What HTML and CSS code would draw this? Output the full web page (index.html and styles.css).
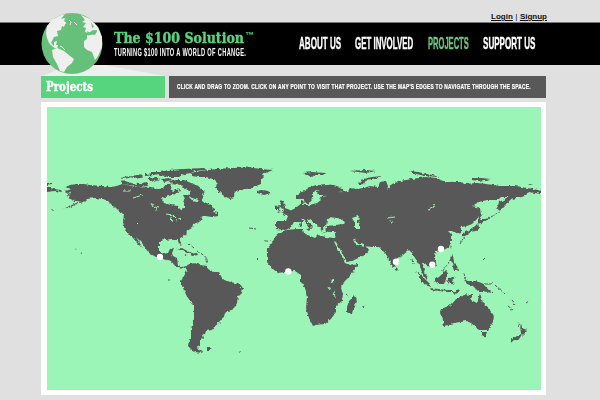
FILE: index.html
```html
<!DOCTYPE html>
<html lang="en">
<head>
<meta charset="utf-8">
<title>The $100 Solution</title>
<link rel="stylesheet" href="styles.css">
</head>
<body>
<div class="account"><a href="#">Login</a><span class="bar">|</span><a href="#">Signup</a></div>
<header class="header">
  <div class="brand">
    <svg class="globe" viewBox="30 5 150 75" width="150" height="75" aria-hidden="true">
      <path fill="#efefef" d="M42 76L59 69L92 65L104 65L165 76Z"/>
      <circle cx="72" cy="43.5" r="30.5" fill="#67c07a"/>
      <path fill="#efefef" d="M60 15.500L65 14L61 19L65 18L64 22L66 22L64 27L62 26L61 30L57 31L58 36L54 37L51 43L54 46L54 42L57 41L56 45L58 45L57 49L53 47L49 43L47 38L46 33L47 26L52 20Z"/>
      <path fill="#efefef" d="M52 50L57 48L64 51L70 56L74 59L72 63L67 67L64 72L60 71L57 64L53 57Z"/>
      <path fill="#efefef" d="M81 15L90 19L98 27L102 37L102 47L98 56L95 60L92 52L87 50L84 47L84 41L87 39L87 35L91 35L96 33L97 30L92 31L88 33L85 32L86 28L83 27L86 23L82 22L85 20Z"/>
      <path fill="#67c07a" d="M87 31L90 33L93 30L97 31L95 35L90 34L88 36ZM91 22L94 27L92 28Z"/>
      <path fill="none" stroke="#efefef" d="M69 20L71 22L70 25M74 22L77 25M63 20L66 24M60 46L62 47L65 50"/>
    </svg>
    <div class="titles">
      <h1 class="name"><span class="fit">The $100 Solution</span><span class="tm">™</span></h1>
      <p class="tagline"><span class="fit">TURNING $100 INTO A WORLD OF CHANGE.</span></p>
    </div>
  </div>
  <nav class="nav">
    <a class="about" href="#"><span>ABOUT US</span></a>
    <a class="involved" href="#"><span>GET INVOLVED</span></a>
    <a class="projects" href="#"><span>PROJECTS</span></a>
    <a class="support" href="#"><span>SUPPORT US</span></a>
  </nav>
</header>
<main class="content">
  <div class="heading-row">
    <h2 class="heading"><span>Projects</span></h2>
    <p class="hint"><span>CLICK AND DRAG TO ZOOM. CLICK ON ANY POINT TO VISIT THAT PROJECT. USE THE MAP'S EDGES TO NAVIGATE THROUGH THE SPACE.</span></p>
  </div>
  <section class="map-card">
    <svg class="map" viewBox="47 107 494 283" role="img" aria-label="World map of projects">
      <defs>
        <filter id="coast" filterUnits="userSpaceOnUse" x="47" y="107" width="494" height="283">
          <feTurbulence type="fractalNoise" baseFrequency="0.3" numOctaves="2" seed="4" result="n"/>
          <feDisplacementMap in="SourceGraphic" in2="n" scale="3.500" xChannelSelector="R" yChannelSelector="G"/>
        </filter>
      </defs>
      <g filter="url(#coast)">
      <g class="land">
        <!-- North America -->
        <path d="M66 187L70 185L77 184L84 184L90 185L103 186L110 187L117 186L122 184L128 185L135 187L142 187L150 188L158 189L163 188L166 184L171 183L170 189L174 191L178 187L181 191L175 194L172 196L164 197L162 200L164 203L171 205L178 206L180 209L184 208L184 203L185 199L183 195L187 195L192 200L197 201L200 198L203 202L209 204L212 207L215 209L213 212L218 213L218 216L211 216L203 216L200 218L203 219L199 222L193 224L192 228L187 231L186 235L180 238L180 241L182 244L181 246L179 244L178 240L173 240L170 239L167 240L163 239L159 242L159 250L163 254L168 253L170 249L174 248L172 253L173 256L177 258L178 265L183 267L186 266L185 268L182 269L176 267L171 261L163 259L156 257L149 253L146 249L142 243L138 239L136 237L141 245L142 248L137 243L133 238L128 233L124 227L123 220L124 215L122 213L119 211L115 207L112 205L108 201L103 199L95 198L87 199L84 202L78 203L71 207L63 209L74 204L80 201L75 201L68 198L70 196L66 195L72 192L67 191L71 189Z"/>
        <!-- Arctic islands -->
        <path d="M121 181L126 180L130 183L139 184L147 182L148 186L138 187L129 185L122 184ZM123 177L132 176L129 178L122 179ZM130 177L140 174L143 177L137 179ZM145 174L156 173L154 175L145 176ZM149 178L156 177L160 180L155 182L149 180ZM157 173L168 170L183 169L203 168L207 170L195 171L191 173L185 174L179 177L169 177L160 175ZM151 172L160 172L161 174L151 175ZM161 179L170 178L172 180L164 182ZM169 181L177 180L184 180L191 183L196 185L202 190L205 192L202 194L204 198L199 200L192 198L187 195L191 192L184 188L181 185L171 184Z"/>
        <!-- Greenland and Iceland -->
        <path d="M191 173L201 171L216 169L232 168L250 167.500L261 169L273 170L268 172L262 174L264 177L261 180L261 184L256 186L250 188L242 190L236 192L233 198L230 199L224 196L219 192L216 187L217 183L213 179L205 177L198 177L192 176ZM257 191L261 190L269 191L271 193L264 195L257 193Z"/>
        <!-- Caribbean, Hawaii and Aleutians -->
        <path d="M176 249L182 248L191 253L187 253L181 250ZM190 254L197 253L198 255L192 256ZM184 254L187 255L184 256ZM202 215L207 211L211 210L213 215L218 216L212 217L205 216ZM80 252L82 253L81 254ZM75 249L77 250L76 250ZM47 187L54 189L61 190L62 192L55 191L47 192ZM47 183L51 183L51 184L47 185ZM64 191L68 190L71 192L66 193Z"/>
        <!-- South America -->
        <path d="M185 267L190 264L195 263L199 265L207 266L208 269L214 272L219 272L221 276L223 280L231 282L238 284L243 288L242 293L238 297L237 303L234 309L226 312L223 317L220 322L214 327L212 330L206 331L205 334L202 335L203 338L200 341L200 345L198 348L200 351L203 353L194 352L188 346L189 340L191 337L191 329L194 319L194 305L188 299L184 290L181 284L181 281L184 276L187 270ZM207 348L212 348L211 350L207 350ZM238 351L241 352L240 353Z"/>
        <!-- Africa -->
        <path d="M281 232L286 230L297 229L303 229L304 233L310 236L315 238L318 235L326 237L334 238L336 243L340 251L346 261L349 265L357 263L357 266L351 275L344 282L341 287L343 294L342 301L336 306L336 312L331 319L325 324L316 325L313 326L309 318L306 308L307 297L305 288L301 281L301 275L298 273L295 271L285 272L278 273L273 269L267 262L267 249L272 243L275 237ZM355 295L357 301L353 312L350 314L347 312L347 307L349 301Z"/>
        <!-- Europe and Asia -->
        <path d="M276 221L286 221L288 216L284 214L282 212L287 212L294 209L298 206L301 204L301 200L304 201L303 205L309 205L317 203L321 200L320 197L327 196L321 195L318 195L317 191L320 190L316 190L313 193L313 198L308 204L304 202L303 199L296 199L296 195L304 191L310 187L316 185L326 184L334 185L342 188L344 191L339 193L347 191L350 188L356 189L363 188L370 186L378 187L380 182L386 181L388 186L387 190L392 184L400 181L412 179L426 177L437 178L443 181L454 182L462 182L464 184L477 183L487 184L500 186L516 186L527 188L534 189L541 191L541 194L535 193L529 192L525 196L516 198L510 200L507 204L500 211L498 208L502 201L508 197L501 197L498 200L487 200L479 202L472 206L477 207L480 213L477 219L472 224L467 226L461 227L459 230L461 233L458 234L453 231L448 231L451 234L451 242L449 247L442 251L436 252L434 256L435 260L437 266L429 268L425 263L422 263L425 269L424 272L429 279L427 280L422 273L420 266L417 261L415 258L412 253L409 250L403 255L397 259L396 265L393 268L390 262L386 254L384 252L379 247L373 247L362 246L358 243L361 246L364 245L369 250L365 255L352 261L347 262L341 254L334 242L334 238L336 232L330 232L325 231L327 226L334 225L344 224L337 218L334 220L331 218L327 221L326 226L322 231L317 225L313 222L307 218L308 222L313 226L310 229L304 222L298 222L294 222L291 227L286 230L276 229Z"/>
        <path d="M281 200L284 203L285 208L290 210L291 212L281 213L284 209L280 207ZM275 206L280 205L279 210L275 210ZM281 212L277 213L279 211ZM300 222L302 223L301 227L299 226ZM306 229L311 228L309 231ZM321 232L327 233L322 234Z"/>
        <!-- Arctic coast islands -->
        <path d="M303 173L312 172L326 173L324 175L315 175L312 177L306 175ZM350 171L365 170L376 171L366 173ZM358 184L363 179L372 177L382 176L378 178L366 180L364 184L359 185ZM409 171L418 172L427 174L440 177L425 176L412 173ZM470 178L481 178L491 179L479 181L472 180ZM528 184L533 184L530 185Z"/>
        <!-- Japan, Kamchatka, Sakhalin and Taiwan -->
        <path d="M507 198L505 203L501 211L497 209L499 202ZM478 207L480 208L481 214L482 216L479 220L478 215ZM478 219L485 219L491 217L484 222L478 224ZM478 223L479 227L478 230L471 232L465 236L463 237L463 233L472 229L476 225ZM458 227L461 229L461 233L458 233ZM450 245L452 246L451 249Z"/>
        <!-- Southeast Asia and New Guinea -->
        <path d="M395 266L398 269L397 271L395 270ZM416 271L422 276L430 284L431 287L425 285L420 278ZM430 288L438 289L447 290L454 291L457 292L447 292L431 290ZM435 279L439 277L445 271L448 273L446 279L444 284L438 284L435 281ZM448 279L452 278L456 277L452 280L454 285L449 282L448 286L447 282ZM451 254L453 256L454 262L457 265L458 271L454 270L452 266L455 265L450 260ZM463 279L468 281L475 281L482 283L487 288L491 293L484 291L478 291L473 286L467 284ZM453 292L460 290L456 294Z"/>
        <!-- Australia and New Zealand -->
        <path d="M441 309L451 305L457 298L463 296L464 294L472 295L471 300L477 303L480 293L483 303L489 308L494 316L493 322L488 330L479 330L471 323L466 321L454 323L444 326L443 320L440 313ZM482 332L487 332L485 337L482 335ZM520 326L524 329L528 330L523 335L521 333ZM520 334L523 336L517 340L512 342L511 340Z"/>
      </g>
      <g class="islets">
        <path d="M485 284L491 284L493 282M488 291L494 293M495 285L505 294M511 300L515 305M508 306L513 310M526 303L529 301M520 326L518 322M449 262L442 272M412 259L413 264M464 273L465 279M491 217L501 211M460 244L464 237M189 244L194 248M197 251L205 256L207 263M250 228L256 229M265 241L270 241M256 257L258 259M168 280L170 280M362 307L366 306M346 294L349 296M483 260L485 258M500 206L497 211M114 206L114 209M51 210L54 210"/>
      </g>
      <g class="water">
        <path d="M163 198L172 195L182 195L184 199L184 207L180 209L178 205L168 204L163 201ZM327 220L331 217L342 219L344 223L334 224L327 224ZM352 218L358 216L360 219L357 221L360 224L360 229L355 229L355 223ZM330 280L334 279L334 282L331 283Z"/>
      </g>
      <g class="lakes">
        <path d="M122 191L131 191M133 198L143 195M154 180L158 182M151 203L153 207L158 211M155 207L159 208M166 214L173 215L176 218M171 217L172 222M176 220L181 218M172 190L178 189L180 193M163 184L173 183M128 181L140 182M387 218L395 217M389 221L393 222M428 210L433 208L435 204M328 286L330 290M334 292L335 298M138 224L139 225"/>
        <path class="seas" d="M335 242L340 251L347 264L356 262M354 239L357 244L364 246M302 219L307 225M314 193L314 199L310 202"/>
      </g>
      </g>
      <g class="pins">
        <circle cx="160" cy="257" r="3.200"/><circle cx="288.300" cy="271.500" r="3.200"/><circle cx="396" cy="261.700" r="3.200"/><circle cx="432.300" cy="264.700" r="3.200"/><circle cx="441" cy="249" r="3.200"/>
      </g>
    </svg>
  </section>
</main>
</body>
</html>
```
FILE: styles.css
```css
* { box-sizing: border-box; }
body {
  margin: 0;
  height: 400px;
  overflow: hidden;
  background: #e0e0e0;
  font-family: "Liberation Sans", Arial, sans-serif;
}
h1, h2, p { margin: 0; }
a { color: inherit; }
.account {
  height: 22px;
  padding: 12px 53px 0 0;
  display: flex;
  justify-content: flex-end;
  font-size: 8px;
  line-height: 10px;
  font-weight: bold;
  color: #111;
}
.bar { margin: 0 2.5px; font-weight: normal; }
.header {
  height: 43px;
  background: #000;
  border-top: 1px solid #777;
  display: flex;
  color: #fff;
}
.brand { display: flex; width: 299px; padding-left: 30px; }
.globe { flex: none; margin: -18px -66px 0 0; position: relative; }
.titles { position: relative; white-space: nowrap; padding-top: 6px; }
.name {
  display: flex;
  height: 18px;
  color: #57d47e;
  font: bold 15px/18px "DejaVu Serif", serif;
  -webkit-text-stroke: .4px #57d47e;
}
.fit { display: inline-block; transform-origin: left center; }
.name .fit { width: 131px; transform: scaleX(.84); }
.tm { font: bold 9px/13px "Liberation Sans", sans-serif; -webkit-text-stroke: 0; }
.tagline { height: 12px; font: bold 10px/12px "Liberation Sans", sans-serif; letter-spacing: .6px; }
.tagline .fit { transform: scaleX(.565); }
.nav { display: flex; gap: 14px; padding-top: 11px; white-space: nowrap; }
.nav a { display: block; height: 20px; text-decoration: none; font: bold 17px/20px "Liberation Sans", sans-serif; }
.nav span { display: inline-block; transform-origin: left center; -webkit-text-stroke: .4px currentColor; }
.about { width: 42px; }
.about span { transform: scaleX(.475); }
.involved { width: 59px; }
.involved span { transform: scaleX(.465); }
.projects { width: 41px; color: #67c77b; }
.projects span { transform: scaleX(.445); }
.support { width: 53px; }
.support span { transform: scaleX(.475); }
.content { width: 505px; margin: 11px 0 0 41px; }
.heading-row { display: flex; gap: 4px; height: 22px; }
.heading {
  width: 124px;
  padding-left: 5px;
  background: #57d47e;
  color: #fff;
  font: bold 12.5px/22px "DejaVu Serif", serif;
  -webkit-text-stroke: .4px #fff;
}
.heading span { display: inline-block; transform: scaleX(.82); transform-origin: left center; }
.hint {
  width: 377px;
  padding-left: 8px;
  background: #585858;
  color: #fff;
  white-space: nowrap;
  overflow: hidden;
  font: bold 6.4px/22px "Liberation Sans", sans-serif;
  letter-spacing: .3px;
}
.hint span { display: inline-block; transform: scaleX(.76); transform-origin: left center; -webkit-text-stroke: .2px #fff; }
.map-card { margin-top: 4px; height: 293px; padding: 5px 5px 5px 6px; background: #fff; }
.map { display: block; width: 494px; height: 283px; background: #9bf5b6; }
.land { fill: #585858; }
.islets { fill: none; stroke: #585858; stroke-width: 1; stroke-dasharray: 3 1; }
.water { fill: #9bf5b6; }
.lakes { fill: none; stroke: #9bf5b6; stroke-width: 1; }
.seas { stroke-width: 1.7; }
.pins { fill: #fff; }
```
